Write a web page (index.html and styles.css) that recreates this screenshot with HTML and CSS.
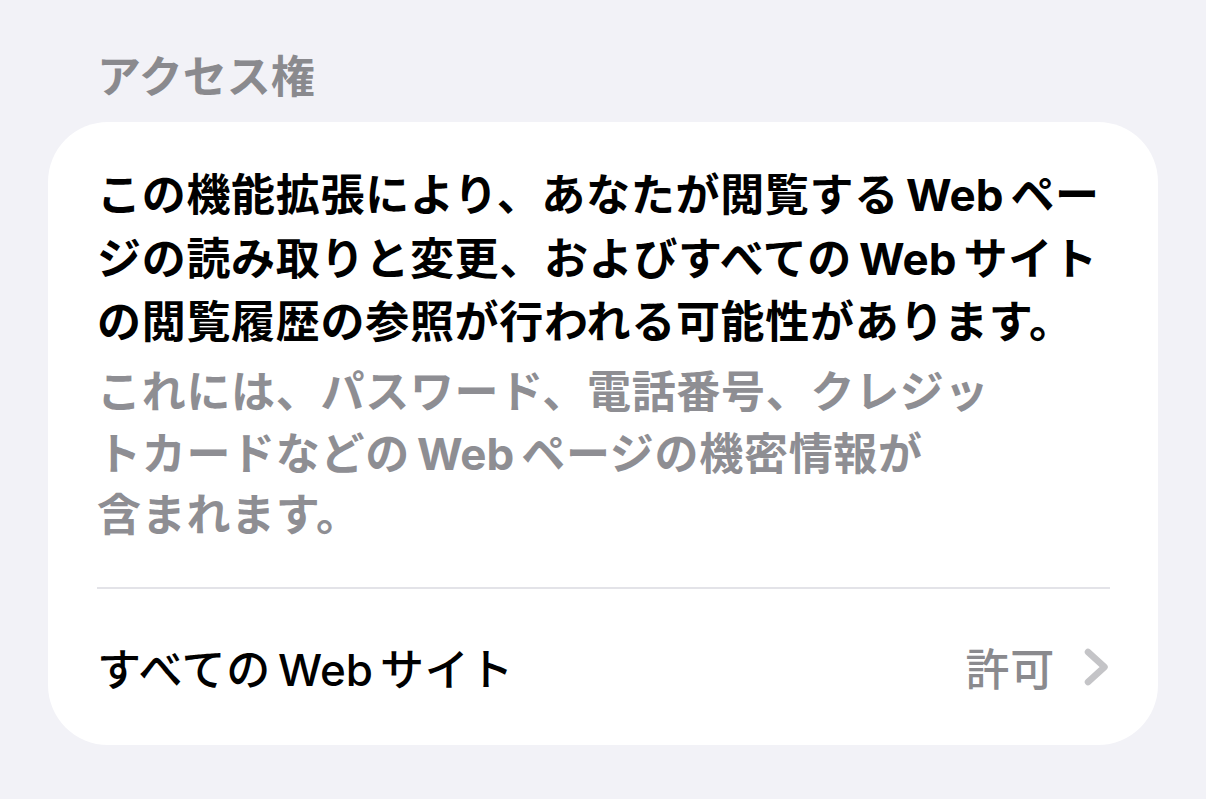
FILE: index.html
```html
<!DOCTYPE html>
<html lang="ja">
<head>
    <meta charset="UTF-8">
    <meta name="viewport" content="width=device-width, initial-scale=1.0">
    <title>アクセス権</title>
    <link rel="stylesheet" href="styles.css">
</head>
<body>

    <div class="page">
        <h2 class="section-title">アクセス権</h2>

        <div class="card">
            <p class="notice">
                この機能拡張により、あなたが閲覧する<span class="latin">Web</span>ペー<br>
                ジの読み取りと変更、およびすべての<span class="latin">Web</span>サイト<br>
                の閲覧履歴の参照が行われる可能性があります。
            </p>
            <p class="detail">
                これには、パスワード、電話番号、クレジッ<br>
                トカードなどの<span class="latin">Web</span>ページの機密情報が<br>
                含まれます。
            </p>

            <div class="divider"></div>

            <div class="row">
                <span class="row-label">すべての<span class="latin">Web</span>サイト</span>
                <span class="row-value">許可</span>
                <svg class="chevron" width="26" height="38" viewBox="0 0 26 38">
                    <path d="M4 4 L20.5 19 L4 34" fill="none" stroke="#c4c4c7" stroke-width="6.5" stroke-linecap="round" stroke-linejoin="round"/>
                </svg>
            </div>
        </div>
    </div>

</body>
</html>
```

FILE: styles.css
```css
body {
    font-family: 'Noto Sans CJK JP', sans-serif;
    background-color: #f2f2f7;
    color: #000;
    margin: 0;
    padding: 0;
}

.page {
    padding: 48px 48px 0 48px;
}

.section-title {
    margin: 0 0 21px 0;
    padding-left: 49px;
    font-size: 44px;
    line-height: 53px;
    font-weight: 700;
    color: #8a8a8e;
}

.card {
    background-color: #fff;
    border-radius: 60px;
    padding: 39px 48px 0 49px;
}

.notice, .detail {
    margin: 0;
    font-size: 44px;
    letter-spacing: 0.7px;
    white-space: nowrap;
}

.notice {
    font-weight: 700;
    line-height: 63.5px;
}

.detail {
    margin-top: 7.5px;
    font-weight: 700;
    line-height: 61.5px;
    color: #8e8e93;
}

/* keep the latin run from stretching the line box */
.latin {
    font-family: 'Inter', 'Noto Sans CJK JP', sans-serif;
    letter-spacing: 0;
    line-height: 1;
    margin: 0 7px;
}

.divider {
    height: 2px;
    background-color: #e3e3e8;
    margin-top: 43px;
}

.row {
    display: flex;
    align-items: center;
    height: 156px;
    font-size: 44px;
    letter-spacing: 0.7px;
}

.row-label {
    flex: 1;
    font-weight: 500;
}

.row-value {
    color: #8a8a8e;
    font-weight: 500;
    margin-right: 29px;
}

.chevron {
    display: block;
}
```
